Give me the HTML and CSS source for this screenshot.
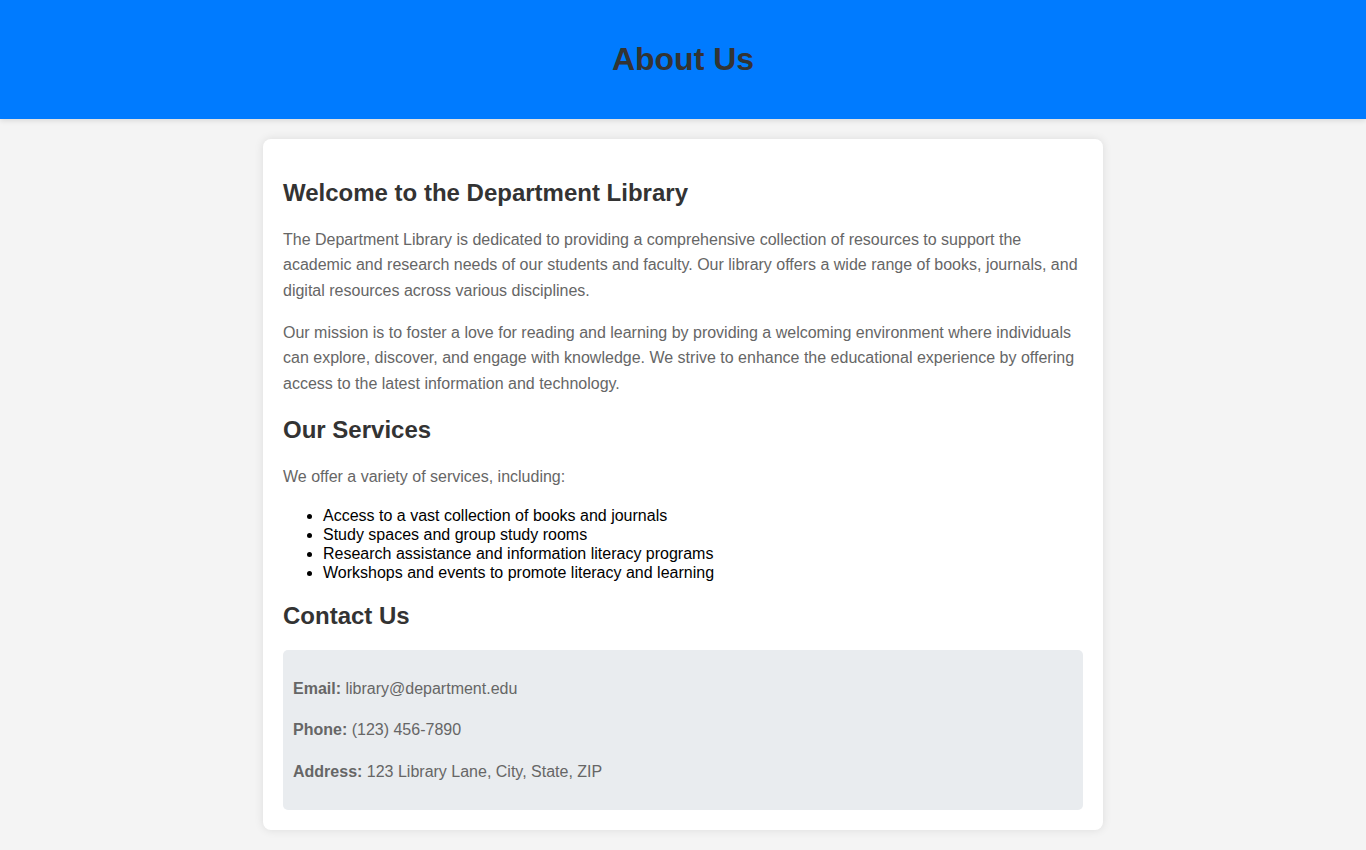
FILE: index.html
```html
<!DOCTYPE html>
<html lang="en">
<head>
<meta charset="UTF-8">
<title>About Us</title>
<link rel="stylesheet" href="styles.css">
</head>
<body>
<header class="site-header">
  <h1>About Us</h1>
</header>
<main class="container">
  <h2>Welcome to the Department Library</h2>
  <p>The Department Library is dedicated to providing a comprehensive collection of resources to support the academic and research needs of our students and faculty. Our library offers a wide range of books, journals, and digital resources across various disciplines.</p>
  <p>Our mission is to foster a love for reading and learning by providing a welcoming environment where individuals can explore, discover, and engage with knowledge. We strive to enhance the educational experience by offering access to the latest information and technology.</p>
  <h2>Our Services</h2>
  <p>We offer a variety of services, including:</p>
  <ul class="services">
    <li>Access to a vast collection of books and journals</li>
    <li>Study spaces and group study rooms</li>
    <li>Research assistance and information literacy programs</li>
    <li>Workshops and events to promote literacy and learning</li>
  </ul>
  <h2>Contact Us</h2>
  <div class="contact">
    <p><strong>Email:</strong> library@department.edu</p>
    <p><strong>Phone:</strong> (123) 456-7890</p>
    <p><strong>Address:</strong> 123 Library Lane, City, State, ZIP</p>
  </div>
</main>
</body>
</html>
```
FILE: styles.css
```css
body {
  margin: 0;
  padding: 0;
  font-family: "Liberation Sans", Arial, sans-serif;
  background: #f4f4f4;
  color: #333;
}

.site-header {
  background: #007bff;
  color: #333;
  padding: 20px;
  text-align: center;
  box-shadow: 0 2px 5px rgba(0, 0, 0, 0.1);
}

.site-header h1 {
  font-size: 32px;
  margin: 21px 0;
}

.container {
  display: block;
  max-width: 800px;
  margin: 20px auto;
  padding: 20px;
  background: #fff;
  border-radius: 8px;
  box-shadow: 0 0 10px rgba(0, 0, 0, 0.1);
}

.container h2 {
  font-size: 24px;
  color: #333;
  margin: 19.92px 0;
}

.container p {
  font-size: 16px;
  line-height: 1.6;
  color: #666;
  margin: 16px 0;
}

.services {
  color: #000;
  margin: 16px 0;
  padding-left: 40px;
  line-height: 19px;
}

.contact {
  background: #e9ecef;
  padding: 10px;
  border-radius: 5px;
}
```
